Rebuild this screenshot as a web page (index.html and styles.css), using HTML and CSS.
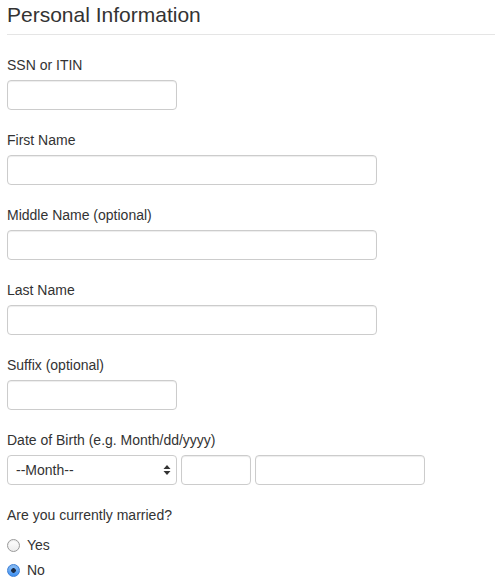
FILE: index.html
```html
<!DOCTYPE html>
<html>
<head>
<meta charset="utf-8">
<link rel="stylesheet" href="styles.css">
</head>
<body>
<form class="form">
  <fieldset class="fieldset">
    <legend class="legend">Personal Information</legend>

    <div class="group">
      <label class="label">SSN or ITIN</label>
      <input class="control control-short" type="text">
    </div>

    <div class="group">
      <label class="label">First Name</label>
      <input class="control control-long" type="text">
    </div>

    <div class="group">
      <label class="label">Middle Name (optional)</label>
      <input class="control control-long" type="text">
    </div>

    <div class="group">
      <label class="label">Last Name</label>
      <input class="control control-long" type="text">
    </div>

    <div class="group">
      <label class="label">Suffix (optional)</label>
      <input class="control control-short" type="text">
    </div>

    <div class="group">
      <label class="label">Date of Birth (e.g. Month/dd/yyyy)</label>
      <div class="dob">
        <div class="select-wrap">
          <select class="control control-short select">
            <option>--Month--</option>
          </select>
          <svg class="select-arrows" width="8" height="12" viewBox="0 0 8 12">
            <path d="M4 1 L7.5 5 H0.5 Z" fill="#333"/>
            <path d="M4 11 L7.5 7 H0.5 Z" fill="#333"/>
          </svg>
        </div>
        <input class="control control-day" type="text">
        <input class="control control-short" type="text">
      </div>
    </div>

    <div class="group group-last">
      <label class="label">Are you currently married?</label>
      <div class="radios">
        <label class="radio"><input class="radio-input" type="radio" name="married"> Yes</label>
        <label class="radio"><input class="radio-input" type="radio" name="married" checked> No</label>
      </div>
    </div>
  </fieldset>
</form>
</body>
</html>
```

FILE: styles.css
```css
* {
  box-sizing: border-box;
}

html, body {
  margin: 0;
  padding: 0;
  background: #fff;
}

body {
  font-family: "Liberation Sans", Arial, Helvetica, sans-serif;
  font-size: 14px;
  line-height: 20px;
  color: #333;
}

.form {
  padding: 0 0 0 7px;
}

.fieldset {
  margin: 0;
  padding: 0;
  border: 0;
  min-width: 0;
}

.legend {
  display: block;
  width: 100%;
  padding: 0 0 4px 0;
  margin: 0 0 20px 0;
  font-size: 21px;
  line-height: 30px;
  color: #333;
  border-bottom: 1px solid #e5e5e5;
}

.group {
  display: flex;
  flex-direction: column;
  align-items: flex-start;
  margin-bottom: 20px;
}

.group-last {
  margin-bottom: 0;
}

.label {
  display: block;
  font-weight: normal;
  margin-bottom: 5px;
  line-height: 20px;
}

.control {
  display: block;
  height: 30px;
  padding: 4px 8px;
  font-family: "Liberation Sans", Arial, Helvetica, sans-serif;
  font-size: 14px;
  color: #555;
  background: #fff;
  border: 1px solid #ccc;
  border-radius: 4px;
  box-shadow: inset 0 1px 1px rgba(0, 0, 0, 0.075);
  margin: 0;
}

.control-short {
  width: 170px;
}

.control-long {
  width: 370px;
}

.control-day {
  width: 70px;
}

.dob {
  display: flex;
  gap: 4px;
}

.select-wrap {
  position: relative;
}

.select {
  -webkit-appearance: none;
  appearance: none;
  color: #333;
  padding: 4px 20px 4px 8px;
  box-shadow: none;
  background: #fff;
}

.select-arrows {
  position: absolute;
  right: 6px;
  top: 9px;
  pointer-events: none;
}

.radios {
  display: flex;
  flex-direction: column;
  gap: 5px;
  margin-top: 5px;
}

.radio {
  display: flex;
  align-items: center;
  line-height: 20px;
  gap: 7px;
}

.radio-input {
  -webkit-appearance: none;
  appearance: none;
  width: 13px;
  height: 13px;
  margin: 0;
  border-radius: 50%;
  border: 1px solid #9a9a9a;
  background: linear-gradient(#ffffff, #ececec);
  box-shadow: inset 0 1px 1px rgba(0, 0, 0, 0.08);
  position: relative;
}

.radio-input:checked {
  border-color: #3d7fd6;
  background: radial-gradient(circle, #1c2d48 0, #1c2d48 2px, transparent 2.6px), linear-gradient(#8fc3fb, #3d8ff0);
}
```
